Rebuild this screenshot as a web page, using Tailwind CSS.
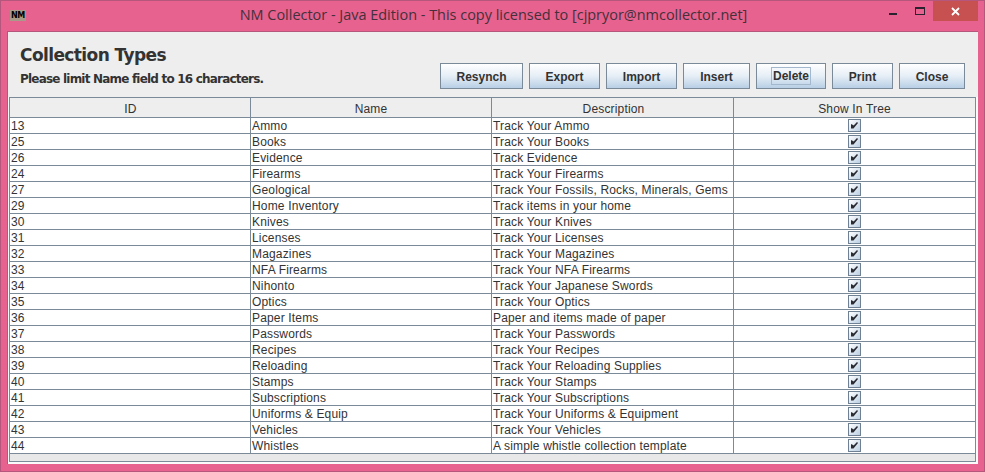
<!DOCTYPE html>
<html><head><meta charset="utf-8"><script src="https://cdn.jsdelivr.net/npm/@tailwindcss/browser@4"></script></head>
<body class="m-0 overflow-hidden">
<div class="w-[985px] h-[472px] box-border border border-[#b5567c] bg-[#e7628f] flex flex-col overflow-hidden font-['Liberation_Sans',sans-serif]">
  <div class="h-[30px] shrink-0 relative flex items-center justify-center">
    <div class="absolute left-[9px] top-[9px] w-[16px] h-[11px] bg-[#a89a88] flex items-center justify-center text-[8px] leading-none font-bold text-black font-['DejaVu_Sans',sans-serif] tracking-[-0.3px] overflow-hidden">NM</div>
    <div class="text-[14.45px] leading-none text-[#44303a] font-['Open_Sans',sans-serif] ml-[2px] -mt-[1px]">NM Collector - Java Edition - This copy licensed to [cjpryor@nmcollector.net]</div>
    <div class="absolute right-[6px] top-0 flex items-start">
      <div class="w-[8px] h-[2px] mt-[12px] mr-[18px] bg-[#2b2230]"></div>
      <div class="w-[10px] h-[8px] mt-[6px] mr-[8px] border border-t-2 border-[#2b2230]"></div>
      <div class="w-[45px] h-[20px] bg-[#c75050] flex items-center justify-center">
        <svg width="9" height="9" viewBox="0 0 9 9"><path d="M1 1 L8 8 M8 1 L1 8" stroke="#fff" stroke-width="1.8"/></svg>
      </div>
    </div>
  </div>
  <div class="ml-[6px] mr-[6px] h-[433px] box-border bg-[#eeeeee] border-t border-l border-[#b5567c] flex flex-col relative">
    <div class="h-[65px] shrink-0 flex justify-between pl-[12px] pr-[13px]">
      <div class="pt-[13px]">
        <div class="text-[17px] leading-[21px] font-bold text-[#333333] font-['DejaVu_Sans',sans-serif] tracking-[-0.6px]">Collection Types</div>
        <div class="text-[12px] leading-[16px] mt-[5px] font-bold text-[#333333] font-['DejaVu_Sans',sans-serif] tracking-[-0.8px]">Please limit Name field to 16 characters.</div>
      </div>
      <div class="flex gap-[6px] pt-[31px] h-[57px] text-[12px] font-bold text-[#333333]">
        <div class="w-[83px] h-[26px] pt-[1px] border border-[#7a8a99] bg-gradient-to-b from-[#ffffff] via-[#e6eef6] to-[#b8cfe5] flex items-center justify-center">Resynch</div>
        <div class="w-[71px] h-[26px] pt-[1px] border border-[#7a8a99] bg-gradient-to-b from-[#ffffff] via-[#e6eef6] to-[#b8cfe5] flex items-center justify-center">Export</div>
        <div class="w-[71px] h-[26px] pt-[1px] border border-[#7a8a99] bg-gradient-to-b from-[#ffffff] via-[#e6eef6] to-[#b8cfe5] flex items-center justify-center">Import</div>
        <div class="w-[67px] h-[26px] pt-[1px] border border-[#7a8a99] bg-gradient-to-b from-[#ffffff] via-[#e6eef6] to-[#b8cfe5] flex items-center justify-center">Insert</div>
        <div class="w-[70px] h-[26px] border border-[#7a8a99] bg-gradient-to-b from-[#ffffff] via-[#e6eef6] to-[#b8cfe5] flex items-center justify-center"><span class="border border-[#a3b8cc] px-[1px] h-[18px] leading-[17px]">Delete</span></div>
        <div class="w-[61px] h-[26px] pt-[1px] border border-[#7a8a99] bg-gradient-to-b from-[#ffffff] via-[#e6eef6] to-[#b8cfe5] flex items-center justify-center">Print</div>
        <div class="w-[66px] h-[26px] pt-[1px] border border-[#7a8a99] bg-gradient-to-b from-[#ffffff] via-[#e6eef6] to-[#b8cfe5] flex items-center justify-center">Close</div>
      </div>
    </div>
    <div class="w-[970px] h-[367px] border-r-2 border-b-2 border-l border-[#fafafa] shrink-0">
    <div class="w-[967px] h-[365px] border border-[#7a8a99] bg-white flex flex-col text-[12px] text-[#333333]">
      <table class="table-fixed border-separate border-spacing-0 w-[965px] text-[12px] leading-[15px] tracking-[0.16px]">
        <colgroup><col class="w-[241px]"><col class="w-[241px]"><col class="w-[242px]"><col class="w-[241px]"></colgroup>
        <thead><tr class="h-[20px] bg-[#eeeeee] text-[#333333] font-normal"><th class="font-normal border-r border-b border-[#7a8a99] pt-[3px] pl-[1px]">ID</th><th class="font-normal border-r border-b border-[#7a8a99] pt-[3px]">Name</th><th class="font-normal border-r border-b border-[#7a8a99] pt-[3px] pl-[2px]">Description</th><th class="font-normal border-b border-[#7a8a99] pt-[3px]">Show In Tree</th></tr></thead>
        <tbody class="[&_td]:h-[16px] [&_td]:leading-[14px] [&_td]:p-0 [&_td]:pl-[1px] [&_td]:pt-[1px] [&_td]:border-b [&_td]:border-r [&_td]:border-[#7a8a99] [&_td]:whitespace-nowrap [&_td]:overflow-hidden [&_td:last-child]:border-r-0 [&_td:last-child]:pl-0 [&_td:last-child]:pt-0">
<tr><td>13</td><td>Ammo</td><td>Track Your Ammo</td><td><div class="w-[13px] h-[13px] mx-auto border border-[#6f8092] bg-gradient-to-br from-[#ffffff] to-[#bcd0e4]"><svg class="block" width="11" height="11" viewBox="0 0 11 11"><path d="M2 4 L4 5 L4.6 5.6 L8 2 L9 3 L4.5 8.6 L2 8.6 Z" fill="#2b2b33"/></svg></div></td></tr>
<tr><td>25</td><td>Books</td><td>Track Your Books</td><td><div class="w-[13px] h-[13px] mx-auto border border-[#6f8092] bg-gradient-to-br from-[#ffffff] to-[#bcd0e4]"><svg class="block" width="11" height="11" viewBox="0 0 11 11"><path d="M2 4 L4 5 L4.6 5.6 L8 2 L9 3 L4.5 8.6 L2 8.6 Z" fill="#2b2b33"/></svg></div></td></tr>
<tr><td>26</td><td>Evidence</td><td>Track Evidence</td><td><div class="w-[13px] h-[13px] mx-auto border border-[#6f8092] bg-gradient-to-br from-[#ffffff] to-[#bcd0e4]"><svg class="block" width="11" height="11" viewBox="0 0 11 11"><path d="M2 4 L4 5 L4.6 5.6 L8 2 L9 3 L4.5 8.6 L2 8.6 Z" fill="#2b2b33"/></svg></div></td></tr>
<tr><td>24</td><td>Firearms</td><td>Track Your Firearms</td><td><div class="w-[13px] h-[13px] mx-auto border border-[#6f8092] bg-gradient-to-br from-[#ffffff] to-[#bcd0e4]"><svg class="block" width="11" height="11" viewBox="0 0 11 11"><path d="M2 4 L4 5 L4.6 5.6 L8 2 L9 3 L4.5 8.6 L2 8.6 Z" fill="#2b2b33"/></svg></div></td></tr>
<tr><td>27</td><td>Geological</td><td>Track Your Fossils, Rocks, Minerals, Gems</td><td><div class="w-[13px] h-[13px] mx-auto border border-[#6f8092] bg-gradient-to-br from-[#ffffff] to-[#bcd0e4]"><svg class="block" width="11" height="11" viewBox="0 0 11 11"><path d="M2 4 L4 5 L4.6 5.6 L8 2 L9 3 L4.5 8.6 L2 8.6 Z" fill="#2b2b33"/></svg></div></td></tr>
<tr><td>29</td><td>Home Inventory</td><td>Track items in your home</td><td><div class="w-[13px] h-[13px] mx-auto border border-[#6f8092] bg-gradient-to-br from-[#ffffff] to-[#bcd0e4]"><svg class="block" width="11" height="11" viewBox="0 0 11 11"><path d="M2 4 L4 5 L4.6 5.6 L8 2 L9 3 L4.5 8.6 L2 8.6 Z" fill="#2b2b33"/></svg></div></td></tr>
<tr><td>30</td><td>Knives</td><td>Track Your Knives</td><td><div class="w-[13px] h-[13px] mx-auto border border-[#6f8092] bg-gradient-to-br from-[#ffffff] to-[#bcd0e4]"><svg class="block" width="11" height="11" viewBox="0 0 11 11"><path d="M2 4 L4 5 L4.6 5.6 L8 2 L9 3 L4.5 8.6 L2 8.6 Z" fill="#2b2b33"/></svg></div></td></tr>
<tr><td>31</td><td>Licenses</td><td>Track Your Licenses</td><td><div class="w-[13px] h-[13px] mx-auto border border-[#6f8092] bg-gradient-to-br from-[#ffffff] to-[#bcd0e4]"><svg class="block" width="11" height="11" viewBox="0 0 11 11"><path d="M2 4 L4 5 L4.6 5.6 L8 2 L9 3 L4.5 8.6 L2 8.6 Z" fill="#2b2b33"/></svg></div></td></tr>
<tr><td>32</td><td>Magazines</td><td>Track Your Magazines</td><td><div class="w-[13px] h-[13px] mx-auto border border-[#6f8092] bg-gradient-to-br from-[#ffffff] to-[#bcd0e4]"><svg class="block" width="11" height="11" viewBox="0 0 11 11"><path d="M2 4 L4 5 L4.6 5.6 L8 2 L9 3 L4.5 8.6 L2 8.6 Z" fill="#2b2b33"/></svg></div></td></tr>
<tr><td>33</td><td>NFA Firearms</td><td>Track Your NFA Firearms</td><td><div class="w-[13px] h-[13px] mx-auto border border-[#6f8092] bg-gradient-to-br from-[#ffffff] to-[#bcd0e4]"><svg class="block" width="11" height="11" viewBox="0 0 11 11"><path d="M2 4 L4 5 L4.6 5.6 L8 2 L9 3 L4.5 8.6 L2 8.6 Z" fill="#2b2b33"/></svg></div></td></tr>
<tr><td>34</td><td>Nihonto</td><td>Track Your Japanese Swords</td><td><div class="w-[13px] h-[13px] mx-auto border border-[#6f8092] bg-gradient-to-br from-[#ffffff] to-[#bcd0e4]"><svg class="block" width="11" height="11" viewBox="0 0 11 11"><path d="M2 4 L4 5 L4.6 5.6 L8 2 L9 3 L4.5 8.6 L2 8.6 Z" fill="#2b2b33"/></svg></div></td></tr>
<tr><td>35</td><td>Optics</td><td>Track Your Optics</td><td><div class="w-[13px] h-[13px] mx-auto border border-[#6f8092] bg-gradient-to-br from-[#ffffff] to-[#bcd0e4]"><svg class="block" width="11" height="11" viewBox="0 0 11 11"><path d="M2 4 L4 5 L4.6 5.6 L8 2 L9 3 L4.5 8.6 L2 8.6 Z" fill="#2b2b33"/></svg></div></td></tr>
<tr><td>36</td><td>Paper Items</td><td>Paper and items made of paper</td><td><div class="w-[13px] h-[13px] mx-auto border border-[#6f8092] bg-gradient-to-br from-[#ffffff] to-[#bcd0e4]"><svg class="block" width="11" height="11" viewBox="0 0 11 11"><path d="M2 4 L4 5 L4.6 5.6 L8 2 L9 3 L4.5 8.6 L2 8.6 Z" fill="#2b2b33"/></svg></div></td></tr>
<tr><td>37</td><td>Passwords</td><td>Track Your Passwords</td><td><div class="w-[13px] h-[13px] mx-auto border border-[#6f8092] bg-gradient-to-br from-[#ffffff] to-[#bcd0e4]"><svg class="block" width="11" height="11" viewBox="0 0 11 11"><path d="M2 4 L4 5 L4.6 5.6 L8 2 L9 3 L4.5 8.6 L2 8.6 Z" fill="#2b2b33"/></svg></div></td></tr>
<tr><td>38</td><td>Recipes</td><td>Track Your Recipes</td><td><div class="w-[13px] h-[13px] mx-auto border border-[#6f8092] bg-gradient-to-br from-[#ffffff] to-[#bcd0e4]"><svg class="block" width="11" height="11" viewBox="0 0 11 11"><path d="M2 4 L4 5 L4.6 5.6 L8 2 L9 3 L4.5 8.6 L2 8.6 Z" fill="#2b2b33"/></svg></div></td></tr>
<tr><td>39</td><td>Reloading</td><td>Track Your Reloading Supplies</td><td><div class="w-[13px] h-[13px] mx-auto border border-[#6f8092] bg-gradient-to-br from-[#ffffff] to-[#bcd0e4]"><svg class="block" width="11" height="11" viewBox="0 0 11 11"><path d="M2 4 L4 5 L4.6 5.6 L8 2 L9 3 L4.5 8.6 L2 8.6 Z" fill="#2b2b33"/></svg></div></td></tr>
<tr><td>40</td><td>Stamps</td><td>Track Your Stamps</td><td><div class="w-[13px] h-[13px] mx-auto border border-[#6f8092] bg-gradient-to-br from-[#ffffff] to-[#bcd0e4]"><svg class="block" width="11" height="11" viewBox="0 0 11 11"><path d="M2 4 L4 5 L4.6 5.6 L8 2 L9 3 L4.5 8.6 L2 8.6 Z" fill="#2b2b33"/></svg></div></td></tr>
<tr><td>41</td><td>Subscriptions</td><td>Track Your Subscriptions</td><td><div class="w-[13px] h-[13px] mx-auto border border-[#6f8092] bg-gradient-to-br from-[#ffffff] to-[#bcd0e4]"><svg class="block" width="11" height="11" viewBox="0 0 11 11"><path d="M2 4 L4 5 L4.6 5.6 L8 2 L9 3 L4.5 8.6 L2 8.6 Z" fill="#2b2b33"/></svg></div></td></tr>
<tr><td>42</td><td>Uniforms &amp; Equip</td><td>Track Your Uniforms &amp; Equipment</td><td><div class="w-[13px] h-[13px] mx-auto border border-[#6f8092] bg-gradient-to-br from-[#ffffff] to-[#bcd0e4]"><svg class="block" width="11" height="11" viewBox="0 0 11 11"><path d="M2 4 L4 5 L4.6 5.6 L8 2 L9 3 L4.5 8.6 L2 8.6 Z" fill="#2b2b33"/></svg></div></td></tr>
<tr><td>43</td><td>Vehicles</td><td>Track Your Vehicles</td><td><div class="w-[13px] h-[13px] mx-auto border border-[#6f8092] bg-gradient-to-br from-[#ffffff] to-[#bcd0e4]"><svg class="block" width="11" height="11" viewBox="0 0 11 11"><path d="M2 4 L4 5 L4.6 5.6 L8 2 L9 3 L4.5 8.6 L2 8.6 Z" fill="#2b2b33"/></svg></div></td></tr>
<tr><td>44</td><td>Whistles</td><td>A simple whistle collection template</td><td><div class="w-[13px] h-[13px] mx-auto border border-[#6f8092] bg-gradient-to-br from-[#ffffff] to-[#bcd0e4]"><svg class="block" width="11" height="11" viewBox="0 0 11 11"><path d="M2 4 L4 5 L4.6 5.6 L8 2 L9 3 L4.5 8.6 L2 8.6 Z" fill="#2b2b33"/></svg></div></td></tr>
        </tbody>
      </table>
      <div class="flex-1 bg-[#e8e8e8]"></div>
    </div>
    </div>
  </div>
</div>
</body></html>
